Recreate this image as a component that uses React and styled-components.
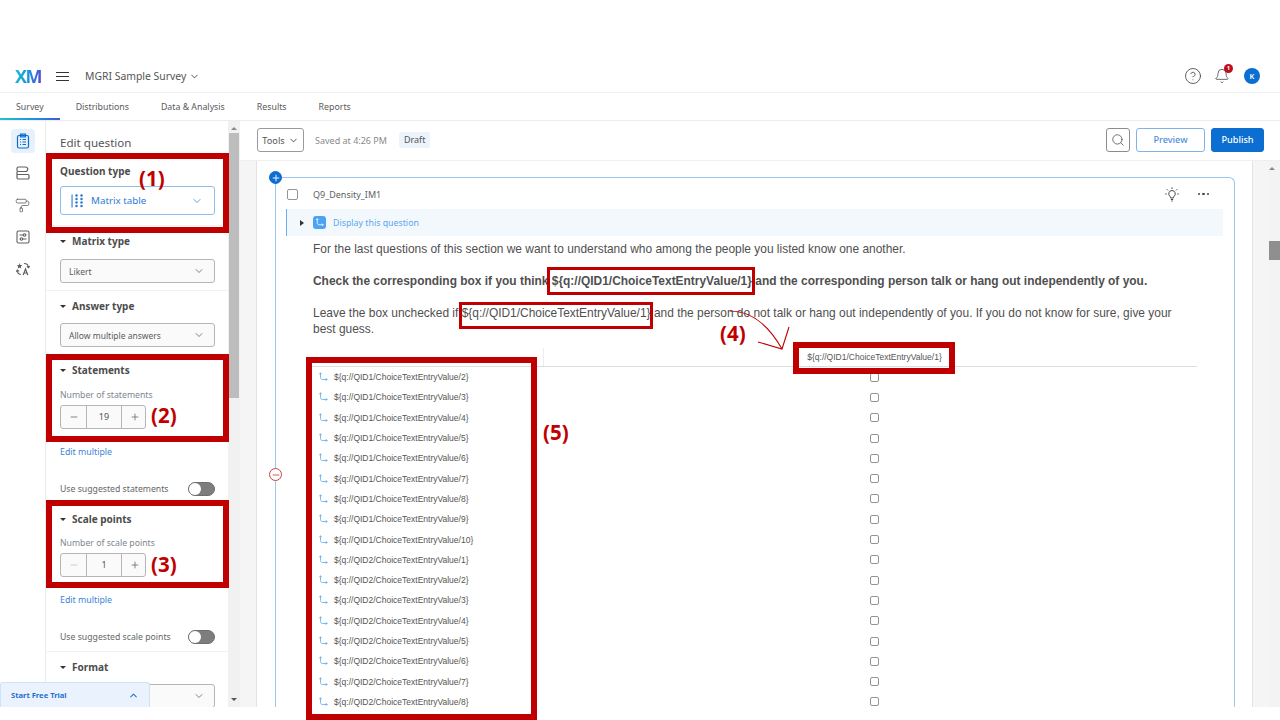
import React from 'react';
import styled, { createGlobalStyle } from 'styled-components';
import { ChevronDown, ChevronUp, CircleHelp, Bell, Search, Minus, Plus, PaintRoller, Settings } from 'lucide-react';

const UI_FONT = '"Noto Sans", "Open Sans", sans-serif';
const TEXT_FONT = '"Liberation Sans", Arial, sans-serif';
const RED = '#c00000';

const GlobalStyle = createGlobalStyle`
  html, body {
    margin: 0;
    padding: 0;
    background: #fff;
    overflow: hidden;
  }
  * { box-sizing: border-box; }
`;

const Page = styled.div`
  position: relative;
  width: 1280px;
  height: 720px;
  padding: 67px 0 13px;
  display: flex;
  flex-direction: column;
  overflow: hidden;
  background: #fff;
  font-family: ${UI_FONT};
  color: #525252;
`;

/* top bar */
const Header = styled.header`
  height: 26px;
  flex: none;
  display: flex;
  align-items: center;
  padding: 0 20px 7px 15px;
  border-bottom: 1px solid #f0f0f0;
`;

const Logo = styled.span`
  width: 26px;
  font: 700 18px/20px ${UI_FONT};
  letter-spacing: -1.5px;
  background: linear-gradient(100deg, #16c4c9 0%, #1b8fe0 55%, #5a43d6 100%);
  -webkit-background-clip: text;
  background-clip: text;
  color: transparent;
`;

const Burger = styled.span`
  width: 13px;
  height: 9px;
  margin-left: 15px;
  border-top: 1px solid #333;
  border-bottom: 1px solid #333;
  position: relative;
  &::after {
    content: '';
    position: absolute;
    left: 0;
    right: 0;
    top: 3px;
    border-top: 1px solid #333;
  }
`;

const SurveyTitle = styled.span`
  margin-left: 16px;
  display: flex;
  align-items: center;
  gap: 3px;
  font-size: 10.4px;
  color: #555;
`;

const HeaderRight = styled.div`
  margin-left: auto;
  display: flex;
  align-items: center;
  color: #444;
`;

const BellWrap = styled.span`
  position: relative;
  display: flex;
  margin-left: 12px;
`;

const BellBadge = styled.span`
  position: absolute;
  top: -4px;
  right: -3px;
  width: 9px;
  height: 9px;
  border-radius: 50%;
  background: #c00d1e;
  color: #fff;
  font-size: 6px;
  font-weight: 700;
  line-height: 9px;
  text-align: center;
`;

const Avatar = styled.span`
  width: 16px;
  height: 16px;
  margin-left: 14px;
  border-radius: 50%;
  background: #0b6ed0;
  color: #fff;
  font-size: 7.5px;
  font-weight: 600;
  line-height: 16px;
  text-align: center;
`;

/* tabs */
const Tabs = styled.nav`
  height: 28px;
  flex: none;
  display: flex;
  border-bottom: 1px solid #ececec;
`;

const Tab = styled.span`
  position: relative;
  padding: 0 16px;
  font-size: 8.8px;
  line-height: 29px;
  color: #5a5a5a;
  ${(p) =>
    p.$active &&
    `&::after {
      content: '';
      position: absolute;
      left: 0;
      right: 0;
      bottom: 0;
      height: 2px;
      background: linear-gradient(90deg, #23c4c9, #1b8fe0 60%, #4a57d0);
    }`}
`;

const Body = styled.div`
  flex: 1;
  min-height: 0;
  display: flex;
`;

/* icon rail */
const Rail = styled.aside`
  width: 46px;
  flex: none;
  display: flex;
  flex-direction: column;
  align-items: center;
  padding: 8px 0 5px;
  gap: 8px;
  border-right: 1px solid #ececec;
  color: #606060;
`;

const RailIcon = styled.span`
  width: 24px;
  height: 24px;
  display: flex;
  align-items: center;
  justify-content: center;
  border-radius: 4px;
  margin-top: ${(p) => (p.$bottom ? 'auto' : '0')};
  background: ${(p) => (p.$active ? '#e6f1fb' : 'transparent')};
  color: ${(p) => (p.$active ? '#0b6ed0' : 'inherit')};
`;

/* edit panel */
const Panel = styled.aside`
  width: 182px;
  flex: none;
  overflow: hidden;
  padding-top: 14px;
`;

const PanelTitle = styled.div`
  padding-left: 14px;
  font-size: 11.6px;
  line-height: 16px;
  color: #555;
  margin-bottom: 13px;
`;

const Section = styled.section`
  padding: ${(p) => (p.$first ? '0' : '8px')} 13px ${(p) => (p.$ruled ? 7 : 8)}px 14px;
  border-bottom: ${(p) => (p.$ruled ? '1px solid #f2f2f2' : 'none')};
`;

const SectionLabel = styled.div`
  display: flex;
  align-items: center;
  gap: 6px;
  font-size: 10px;
  font-weight: 700;
  line-height: 14px;
  color: #4c4c4c;
  margin-bottom: ${(p) => p.$gap || 10}px;
  &::before {
    content: ${(p) => (p.$noCaret ? 'none' : "''")};
    border-left: 3px solid transparent;
    border-right: 3px solid transparent;
    border-top: 3px solid #333;
  }
`;

const SelectBox = styled.div`
  height: ${(p) => (p.$tall ? 29 : 24)}px;
  display: flex;
  align-items: center;
  justify-content: space-between;
  padding: 0 ${(p) => (p.$tall ? 11 : 9)}px 0 ${(p) => (p.$tall ? 10 : 8)}px;
  margin-bottom: ${(p) => (p.$tall ? 3 : 0)}px;
  border: 1px solid ${(p) => (p.$tall ? '#8fbdec' : '#b5b5b5')};
  border-radius: 3px;
  background: ${(p) => (p.$tall ? '#fff' : '#fafafa')};
  font-size: ${(p) => (p.$tall ? 9.8 : 8.5)}px;
  color: ${(p) => (p.$tall ? '#2f7ad3' : '#5a5a5a')};
`;

const SelectValue = styled.span`
  display: flex;
  align-items: center;
  gap: 6px;
`;

const FieldLabel = styled.div`
  font-size: 8.7px;
  line-height: 14px;
  color: #7d8790;
  margin-bottom: 3px;
`;

const Stepper = styled.div`
  width: 86px;
  height: 24px;
  display: grid;
  grid-template-columns: 25px 36px 25px;
  border: 1px solid #b5b5b5;
  border-radius: 3px;
  background: #fafafa;
`;

const StepButton = styled.span`
  display: flex;
  align-items: center;
  justify-content: center;
  color: ${(p) => (p.$disabled ? '#c4c4c4' : '#707070')};
`;

const StepValue = styled.span`
  border-left: 1px solid #b5b5b5;
  border-right: 1px solid #b5b5b5;
  font-size: 9px;
  line-height: 22px;
  text-align: center;
  color: #555;
`;

const EditLink = styled.div`
  margin-top: 16px;
  font-size: 8.8px;
  line-height: 14px;
  color: #3c83d8;
`;

const ToggleRow = styled.div`
  margin-top: 23px;
  height: 14px;
  display: flex;
  align-items: center;
  justify-content: space-between;
  font-size: 8.7px;
  color: #666;
`;

const Toggle = styled.span`
  width: 27px;
  height: 14px;
  border-radius: 7px;
  border: 1px solid #6f6f6f;
  background: #7d7d7d;
  position: relative;
  &::before {
    content: '';
    position: absolute;
    left: 0;
    top: 0;
    width: 12px;
    height: 12px;
    border-radius: 50%;
    background: #fff;
  }
`;

const PanelScrollbar = styled.div`
  width: 12px;
  flex: none;
  background: #f1f1f1;
  display: flex;
  flex-direction: column;
  align-items: center;
  padding-top: 12px;
  position: relative;
`;

const ScrollThumb = styled.div`
  width: 10px;
  height: 265px;
  background: #bdbdbd;
`;

const ScrollArrow = styled.span`
  position: absolute;
  ${(p) => (p.$down ? 'bottom: 6px;' : 'top: 6px;')}
  border-left: 3px solid transparent;
  border-right: 3px solid transparent;
  ${(p) => (p.$down ? 'border-top: 3px solid #555;' : 'border-bottom: 3px solid #888;')}
`;

/* main column */
const Main = styled.main`
  flex: 1;
  min-width: 0;
  display: flex;
  flex-direction: column;
`;

const Toolbar = styled.div`
  height: 40px;
  flex: none;
  display: flex;
  align-items: center;
  padding: 0 16px 1px 17px;
  border-bottom: 1px solid #efefef;
`;

const ToolsButton = styled.span`
  width: 47px;
  height: 24px;
  display: flex;
  align-items: center;
  justify-content: center;
  gap: 3px;
  border: 1px solid #9a9a9a;
  border-radius: 3px;
  font-size: 9.2px;
  color: #555;
`;

const SavedText = styled.span`
  margin-left: 11px;
  font-size: 9px;
  color: #8a8a8a;
`;

const DraftBadge = styled.span`
  margin-left: 12px;
  padding: 0 5px;
  height: 16px;
  border-radius: 3px;
  background: #ebf3fb;
  font-size: 9px;
  line-height: 16px;
  color: #555;
`;

const ToolbarRight = styled.div`
  margin-left: auto;
  display: flex;
  gap: 6px;
`;

const SearchButton = styled.span`
  width: 24px;
  height: 24px;
  display: flex;
  align-items: center;
  justify-content: center;
  border: 1px solid #8c8c8c;
  border-radius: 3px;
  color: #555;
`;

const ActionButton = styled.span`
  width: ${(p) => (p.$primary ? 53 : 69)}px;
  height: 24px;
  border: 1px solid ${(p) => (p.$primary ? '#0b6ed0' : '#7fb4ea')};
  border-radius: 3px;
  background: ${(p) => (p.$primary ? '#0b6ed0' : '#fff')};
  color: ${(p) => (p.$primary ? '#fff' : '#4f8edb')};
  font-size: 9.2px;
  font-weight: 500;
  line-height: 22px;
  text-align: center;
`;

const Workspace = styled.div`
  flex: 1;
  min-height: 0;
  display: flex;
  background: #f5f5f5;
  padding-left: 16px;
`;

const Card = styled.div`
  width: 997px;
  flex: none;
  background: #fff;
  border-left: 1px solid #e3e3e3;
  border-right: 1px solid #e3e3e3;
  padding: 16px 17px 0 18px;
  overflow: hidden;
`;

const QuestionBlock = styled.div`
  position: relative;
  height: 700px;
  border: 1px solid #9cc5ef;
  border-bottom: none;
  border-radius: 0 6px 0 0;
`;

const RoundMark = styled.span`
  position: absolute;
  left: -7px;
  top: ${(p) => p.$top}px;
  width: 13px;
  height: 13px;
  border-radius: 50%;
  display: flex;
  align-items: center;
  justify-content: center;
  background: ${(p) => (p.$remove ? '#fff' : '#0b6ed0')};
  border: 1px solid ${(p) => (p.$remove ? '#c8443f' : '#0b6ed0')};
  color: ${(p) => (p.$remove ? '#c8443f' : '#fff')};
`;

const QuestionHead = styled.div`
  height: 31px;
  display: flex;
  align-items: center;
  padding: 1px 25px 0 11px;
  color: #555;
`;

const CheckBox = styled.span`
  width: ${(p) => p.$size || 11}px;
  height: ${(p) => p.$size || 11}px;
  flex: none;
  border: 1px solid #949494;
  border-radius: 2px;
  background: #fff;
`;

const QuestionName = styled.span`
  margin-left: 15px;
  font-size: 9px;
  color: #5f5f5f;
`;

const HeadTools = styled.span`
  margin-left: auto;
  display: flex;
  align-items: center;
  gap: 19px;
`;

const MoreDots = styled.span`
  display: flex;
  gap: 2px;
  & > i {
    width: 2.5px;
    height: 2.5px;
    border-radius: 50%;
    background: #444;
  }
`;

const DisplayRow = styled.div`
  height: 27px;
  margin: 0 11px 0 10px;
  display: flex;
  align-items: center;
  padding-left: 13px;
  background: #f3f8fd;
  border-left: 1px solid #69aef2;
  font-size: 8.8px;
  color: #5aa7f0;
`;

const Caret = styled.span`
  border-top: 3px solid transparent;
  border-bottom: 3px solid transparent;
  border-left: 4px solid #333;
  margin-right: 9px;
`;

const LogicBadge = styled.span`
  width: 13px;
  height: 13px;
  margin-right: 7px;
  border-radius: 3px;
  background: #4da3f2;
  display: flex;
  align-items: center;
  justify-content: center;
`;

const Paragraph = styled.p`
  margin: ${(p) => p.$top}px 40px 0 37px;
  font-family: ${TEXT_FONT};
  font-size: 11.94px;
  line-height: 16px;
  font-weight: ${(p) => (p.$bold ? 700 : 400)};
  color: #4f4f4f;
`;

const MatrixTable = styled.div`
  margin: 11px 0 0 32px;
  width: 889px;
  font-family: ${TEXT_FONT};
  font-size: 8.5px;
  color: #555;
`;

const MatrixHeader = styled.div`
  height: 19px;
  display: grid;
  grid-template-columns: 235px 1fr;
  border-bottom: 1px solid #dcdcdc;
`;

const HeaderLabel = styled.div`
  border-left: 1px solid #ececec;
  padding-left: 8px;
  text-align: center;
  line-height: 18px;
`;

const MatrixRow = styled.div`
  height: 20.31px;
  display: grid;
  grid-template-columns: 235px 1fr;
  align-items: center;
`;

const Statement = styled.div`
  display: flex;
  align-items: center;
  gap: 6px;
  padding-left: 10px;
`;

const CheckCell = styled.div`
  display: flex;
  justify-content: center;
  padding-left: 8px;
`;

const WorkspaceGutter = styled.div`
  width: 16px;
  flex: none;
`;

const MainScrollbar = styled.div`
  width: 11px;
  flex: none;
  position: relative;
  background: #f3f3f3;
`;

const MainThumb = styled.div`
  margin-top: 80px;
  height: 19px;
  background: #8f8f8f;
`;

/* overlays */
const TrialBar = styled.div`
  position: absolute;
  left: 0;
  top: 682px;
  width: 150px;
  height: 25px;
  display: flex;
  align-items: center;
  justify-content: space-between;
  padding: 0 10px 0 10px;
  background: #eaf3fd;
  border: 1px solid #cfe2f7;
  border-bottom: none;
  border-radius: 3px 3px 0 0;
  font-size: 7.6px;
  font-weight: 700;
  color: #1f6fd0;
`;

const RedBox = styled.div`
  position: absolute;
  left: ${(p) => p.$x}px;
  top: ${(p) => p.$y}px;
  width: ${(p) => p.$w}px;
  height: ${(p) => p.$h}px;
  border: ${(p) => p.$t}px solid ${RED};
  pointer-events: none;
`;

const RedLabel = styled.div`
  position: absolute;
  left: ${(p) => p.$x}px;
  top: ${(p) => p.$y}px;
  font: 700 20.5px/26px "Open Sans", ${UI_FONT};
  color: ${RED};
  pointer-events: none;
`;

const ArrowOverlay = styled.svg`
  position: absolute;
  left: 720px;
  top: 300px;
  pointer-events: none;
`;

const BranchIcon = ({ color = '#6db2f2', size = 10 }) => (
  <svg width={size} height={size} viewBox="0 0 12 12" fill="none" stroke={color} strokeWidth="1.1">
    <path d="M3 1v5.5c0 1.4.8 2.5 2.2 2.5H11" />
    <path d="M1.4 2.6 3 1l1.6 1.6M9.4 7.4 11 9l-1.6 1.6" />
  </svg>
);

const MatrixIcon = () => (
  <svg width="14" height="14" viewBox="0 0 14 14" fill="#2f7ad3">
    <rect x="0.5" y="0.5" width="1.1" height="13" />
    {[1.5, 5, 8.5, 12].map((y) => (
      <g key={y}>
        <circle cx="5.5" cy={y} r="1.25" />
        <circle cx="10.5" cy={y} r="1.25" />
      </g>
    ))}
  </svg>
);

const SurveyIcon = () => (
  <svg width="16" height="16" viewBox="0 0 16 16" fill="none" stroke="#0b6ed0" strokeWidth="1.2">
    <rect x="2.5" y="2.5" width="11" height="12.5" rx="1.5" />
    <path d="M5.5 1.2h5v2.6h-5zM5 6.5h1M7.5 6.5H11M5 9h1M7.5 9H11M5 11.5h1M7.5 11.5H11" />
  </svg>
);

const BlocksIcon = () => (
  <svg width="16" height="16" viewBox="0 0 16 16" fill="none" stroke="currentColor" strokeWidth="1.2">
    <path d="M3.5 2h7a2 2 0 0 1 0 4.5h-7a1.5 1.5 0 0 1-1.5-1.5V3.5A1.5 1.5 0 0 1 3.5 2z" />
    <path d="M2 6.5v6A1.5 1.5 0 0 0 3.5 14H13a1 1 0 0 0 1-1v-2.5a1 1 0 0 0-1-1H2" />
  </svg>
);

const SlidersBoxIcon = () => (
  <svg width="14" height="14" viewBox="0 0 14 14" fill="none" stroke="currentColor" strokeWidth="1.1">
    <rect x="1" y="1" width="12" height="12" rx="1.5" />
    <path d="M3.5 5h7M3.5 9h7" />
    <circle cx="8.5" cy="5" r="1.2" fill="#fff" />
    <circle cx="5.5" cy="9" r="1.2" fill="#fff" />
  </svg>
);

const TranslateIcon = () => (
  <svg width="14" height="14" viewBox="0 0 14 14" fill="none" stroke="currentColor" strokeWidth="1.1">
    <path d="M3.5 1 4.4 3l2 .2-1.5 1.3.4 2-1.8-1-1.8 1 .4-2L1 3.200 3 3z" fill="currentColor" stroke="none" />
    <path d="M8 1.500c2.600 0 4.500 1.700 4.500 4.200M10.900 4.300l1.600 1.500 1.300-1.600" />
    <path d="M1.200 8.300c0 2.200 1.400 3.800 3.600 4.200M3.200 9.400 1.300 8 .2 9.700" />
    <path d="m7.200 13 2.300-6 2.300 6M8 11h3" strokeWidth="1.2" />
  </svg>
);

const BulbIcon = () => (
  <svg width="14" height="15" viewBox="0 0 14 15" fill="none" stroke="#4a4a4a" strokeWidth="1">
    <path d="M7 3.500a3.300 3.300 0 0 0-2 5.900c.5.400.6 1 .6 1.600h2.800c0-.6.100-1.200.6-1.600a3.300 3.300 0 0 0-2-5.900z" />
    <path d="M5.800 12.500h2.400M6.300 14h1.400M7 .3V2M1.800 2.200 3 3.400M12.200 2.200 11 3.400M.2 7h1.500M12.300 7h1.500" />
  </svg>
);

const statements = [
  ...Array.from({ length: 9 }, (_, i) => `\${q://QID1/ChoiceTextEntryValue/${i + 2}}`),
  ...Array.from({ length: 10 }, (_, i) => `\${q://QID2/ChoiceTextEntryValue/${i + 1}}`),
];

const redBoxes = [
  { x: 46, y: 153, w: 183, h: 80, t: 6 },
  { x: 46, y: 354, w: 183, h: 88, t: 6 },
  { x: 46, y: 500, w: 183, h: 88, t: 6 },
  { x: 793, y: 342, w: 162, h: 32, t: 6 },
  { x: 306, y: 357, w: 231, h: 363, t: 6 },
  { x: 547, y: 267, w: 208, h: 28, t: 3 },
  { x: 459, y: 302, w: 194, h: 27, t: 3 },
];

const redLabels = [
  { x: 139, y: 165, text: '(1)' },
  { x: 151, y: 402, text: '(2)' },
  { x: 151, y: 551, text: '(3)' },
  { x: 720, y: 320, text: '(4)' },
  { x: 543, y: 419, text: '(5)' },
];

const App = () => (
  <Page>
    <GlobalStyle />
    <Header>
      <Logo>XM</Logo>
      <Burger />
      <SurveyTitle>
        MGRI Sample Survey <ChevronDown size={11} strokeWidth={1.8} color="#333" />
      </SurveyTitle>
      <HeaderRight>
        <CircleHelp size={18} strokeWidth={1.1} />
        <BellWrap>
          <Bell size={16} strokeWidth={1.2} />
          <BellBadge>1</BellBadge>
        </BellWrap>
        <Avatar>K</Avatar>
      </HeaderRight>
    </Header>

    <Tabs>
      <Tab $active>Survey</Tab>
      <Tab>Distributions</Tab>
      <Tab>Data &amp; Analysis</Tab>
      <Tab>Results</Tab>
      <Tab>Reports</Tab>
    </Tabs>

    <Body>
      <Rail>
        <RailIcon $active>
          <SurveyIcon />
        </RailIcon>
        <RailIcon>
          <BlocksIcon />
        </RailIcon>
        <RailIcon>
          <PaintRoller size={15} strokeWidth={1.3} />
        </RailIcon>
        <RailIcon>
          <SlidersBoxIcon />
        </RailIcon>
        <RailIcon>
          <TranslateIcon />
        </RailIcon>
        <RailIcon $bottom>
          <Settings size={15} strokeWidth={1.3} />
        </RailIcon>
      </Rail>

      <Panel>
        <PanelTitle>Edit question</PanelTitle>
        <Section $first $ruled>
          <SectionLabel $noCaret $gap={8}>
            Question type
          </SectionLabel>
          <SelectBox $tall>
            <SelectValue>
              <MatrixIcon />
              Matrix table
            </SelectValue>
            <ChevronDown size={12} strokeWidth={1.5} />
          </SelectBox>
        </Section>
        <Section $ruled>
          <SectionLabel $gap={11}>Matrix type</SectionLabel>
          <SelectBox>
            Likert
            <ChevronDown size={12} strokeWidth={1.5} />
          </SelectBox>
        </Section>
        <Section>
          <SectionLabel>Answer type</SectionLabel>
          <SelectBox>
            Allow multiple answers
            <ChevronDown size={12} strokeWidth={1.5} />
          </SelectBox>
        </Section>
        <Section>
          <SectionLabel $gap={11}>Statements</SectionLabel>
          <FieldLabel>Number of statements</FieldLabel>
          <Stepper>
            <StepButton>
              <Minus size={10} />
            </StepButton>
            <StepValue>19</StepValue>
            <StepButton>
              <Plus size={10} />
            </StepButton>
          </Stepper>
          <EditLink>Edit multiple</EditLink>
          <ToggleRow>
            Use suggested statements
            <Toggle />
          </ToggleRow>
        </Section>
        <Section $ruled>
          <SectionLabel>Scale points</SectionLabel>
          <FieldLabel>Number of scale points</FieldLabel>
          <Stepper>
            <StepButton $disabled>
              <Minus size={10} />
            </StepButton>
            <StepValue>1</StepValue>
            <StepButton>
              <Plus size={10} />
            </StepButton>
          </Stepper>
          <EditLink>Edit multiple</EditLink>
          <ToggleRow>
            Use suggested scale points
            <Toggle />
          </ToggleRow>
        </Section>
        <Section>
          <SectionLabel>Format</SectionLabel>
          <SelectBox>
            <span />
            <ChevronDown size={12} strokeWidth={1.5} />
          </SelectBox>
        </Section>
      </Panel>

      <PanelScrollbar>
        <ScrollArrow />
        <ScrollThumb />
        <ScrollArrow $down />
      </PanelScrollbar>

      <Main>
        <Toolbar>
          <ToolsButton>
            Tools <ChevronDown size={11} strokeWidth={1.8} color="#333" />
          </ToolsButton>
          <SavedText>Saved at 4:26 PM</SavedText>
          <DraftBadge>Draft</DraftBadge>
          <ToolbarRight>
            <SearchButton>
              <Search size={14} strokeWidth={1.4} />
            </SearchButton>
            <ActionButton>Preview</ActionButton>
            <ActionButton $primary>Publish</ActionButton>
          </ToolbarRight>
        </Toolbar>

        <Workspace>
          <Card>
            <QuestionBlock>
              <RoundMark $top={-7}>
                <Plus size={10} strokeWidth={2.2} />
              </RoundMark>
              <RoundMark $top={290} $remove>
                <Minus size={10} strokeWidth={2} />
              </RoundMark>
              <QuestionHead>
                <CheckBox />
                <QuestionName>Q9_Density_IM1</QuestionName>
                <HeadTools>
                  <BulbIcon />
                  <MoreDots>
                    <i />
                    <i />
                    <i />
                  </MoreDots>
                </HeadTools>
              </QuestionHead>
              <DisplayRow>
                <Caret />
                <LogicBadge>
                  <BranchIcon color="#fff" size={9} />
                </LogicBadge>
                Display this question
              </DisplayRow>
              <Paragraph $top={5}>
                For the last questions of this section we want to understand who among the people you listed know one another.
              </Paragraph>
              <Paragraph $top={16} $bold>
                Check the corresponding box if you think {'${q://QID1/ChoiceTextEntryValue/1}'} and the corresponding person talk or hang out independently of you.
              </Paragraph>
              <Paragraph $top={16}>
                Leave the box unchecked if {'${q://QID1/ChoiceTextEntryValue/1}'} and the person do not talk or hang out independently of you. If you do not know for sure, give your best guess.
              </Paragraph>
              <MatrixTable>
                <MatrixHeader>
                  <div />
                  <HeaderLabel>{'${q://QID1/ChoiceTextEntryValue/1}'}</HeaderLabel>
                </MatrixHeader>
                {statements.map((text) => (
                  <MatrixRow key={text}>
                    <Statement>
                      <BranchIcon />
                      {text}
                    </Statement>
                    <CheckCell>
                      <CheckBox $size={9} />
                    </CheckCell>
                  </MatrixRow>
                ))}
              </MatrixTable>
            </QuestionBlock>
          </Card>
          <WorkspaceGutter />
          <MainScrollbar>
            <ScrollArrow />
            <MainThumb />
          </MainScrollbar>
        </Workspace>
      </Main>
    </Body>

    <TrialBar>
      Start Free Trial
      <ChevronUp size={11} strokeWidth={2.2} />
    </TrialBar>

    {redBoxes.map((b) => (
      <RedBox key={`${b.x}-${b.y}`} $x={b.x} $y={b.y} $w={b.w} $h={b.h} $t={b.t} />
    ))}
    {redLabels.map((l) => (
      <RedLabel key={l.text} $x={l.x} $y={l.y}>
        {l.text}
      </RedLabel>
    ))}
    <ArrowOverlay width="80" height="60" viewBox="0 0 80 60" fill="none" stroke={RED} strokeWidth="1.1">
      <path d="M10 11c14 0 34 6 52 38" />
      <path d="M69 27 62 49 38 42" />
    </ArrowOverlay>
  </Page>
);

export default App;
